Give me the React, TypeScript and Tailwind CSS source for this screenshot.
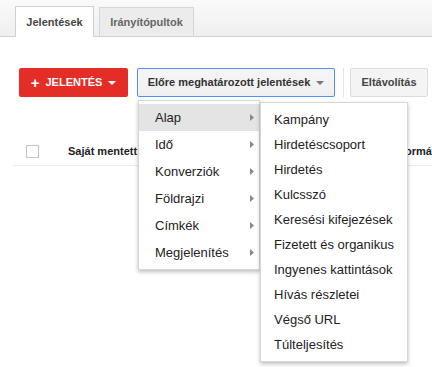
const groups = ['Alap', 'Idő', 'Konverziók', 'Földrajzi', 'Címkék', 'Megjelenítés'];
const reports = [
  'Kampány',
  'Hirdetéscsoport',
  'Hirdetés',
  'Kulcsszó',
  'Keresési kifejezések',
  'Fizetett és organikus',
  'Ingyenes kattintások',
  'Hívás részletei',
  'Végső URL',
  'Túlteljesítés',
];

const Caret = ({ color }: { color: string }) => (
  <svg width="8" height="4" viewBox="0 0 8 4" className="ml-[6px]">
    <path d="M0 0h8L4 4z" fill={color} />
  </svg>
);

const Arrow = () => (
  <svg width="4" height="7" viewBox="0 0 4 7">
    <path d="M0 0l4 3.5L0 7z" fill="#888" />
  </svg>
);

export default function App() {
  return (
    <div className="relative w-[432px] h-[367px] overflow-hidden bg-white font-['Liberation_Sans',Arial,sans-serif]">
      {/* tabs */}
      <div className="flex items-end gap-[5px] h-[37px] pl-[15px] border-b border-[#d0d0d0] bg-gradient-to-b from-[#fafafa] to-[#efefef]">
        <div className="h-[31px] -mb-px w-[79px] flex items-center justify-center bg-white border border-b-0 border-[#d0d0d0] text-[11px] font-bold text-[#444]">
          Jelentések
        </div>
        <div className="h-[29px] w-[95px] flex items-center justify-center bg-[#ececec] border border-b-0 border-[#d6d6d6] text-[11px] font-bold text-[#666]">
          Irányítópultok
        </div>
      </div>

      {/* toolbar */}
      <div className="flex items-center h-[29px] mt-[31px] pl-[19px]">
        <button className="h-[29px] w-[109px] flex items-center justify-center rounded-[2px] bg-[#e52d27] text-white text-[11px] font-bold">
          <span className="text-[15px] leading-none mr-[6px] font-bold">+</span>
          JELENTÉS
          <Caret color="#fff" />
        </button>
        <button className="ml-[9px] h-[29px] w-[198px] flex items-center justify-center rounded-[2px] border border-[#4d90fe] bg-gradient-to-b from-[#f5f5f5] to-[#f0f0f0] text-[11px] font-bold text-[#333]">
          Előre meghatározott jelentések
          <Caret color="#777" />
        </button>
        <div className="ml-[8px] w-px h-[29px] bg-[#e3e3e3]" />
        <button className="ml-[6px] h-[29px] w-[78px] flex items-center justify-center rounded-[2px] border border-[#dcdcdc] bg-[#f4f4f4] text-[11px] font-bold text-[#444]">
          Eltávolítás
        </button>
      </div>

      {/* table header */}
      <div className="flex items-center h-[28px] mt-[41px] ml-[13px] border-b border-[#ebebeb]">
        <div className="ml-[13px] w-[13px] h-[13px] border border-[#c6c6c6] bg-white" />
        <div className="ml-[29px] text-[11px] font-bold text-[#222]">Saját mentett jelentések</div>
        <div className="ml-auto mr-[-20px] text-[11px] font-bold text-[#222]">Formátum</div>
      </div>

      {/* first-level menu */}
      <div className="absolute left-[138px] top-[100px] w-[122px] py-[3px] bg-white border border-[#d6d6d6] shadow-[0_2px_4px_rgba(0,0,0,0.25)]">
        {groups.map((g, i) => (
          <div
            key={g}
            className={`flex items-center justify-between h-[27px] pl-[16px] pr-[5px] text-[13px] text-[#222] ${i === 0 ? 'bg-[#e4e4e4]' : ''}`}
          >
            <span>{g}</span>
            <Arrow />
          </div>
        ))}
      </div>

      {/* second-level menu */}
      <div className="absolute left-[260px] top-[102px] w-[148px] py-[4px] bg-white border border-[#d6d6d6] shadow-[0_2px_4px_rgba(0,0,0,0.25)]">
        {reports.map((r) => (
          <div key={r} className="flex items-center h-[25px] pl-[13px] text-[13px] text-[#222] whitespace-nowrap">
            {r}
          </div>
        ))}
      </div>
    </div>
  );
}
